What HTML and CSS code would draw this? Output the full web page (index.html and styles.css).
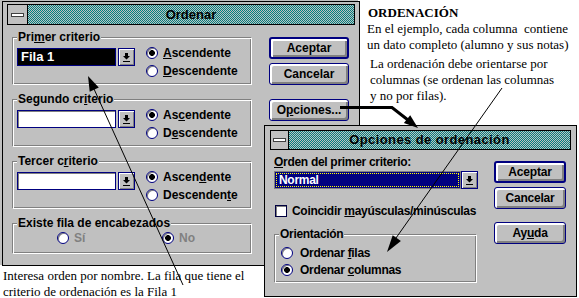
FILE: index.html
```html
<!DOCTYPE html>
<html lang="es">
<head>
  <meta charset="UTF-8" />
  <meta name="viewport" content="width=device-width, initial-scale=1.0"/>
  <title>Ordenar</title>
  <link rel="stylesheet" href="styles.css">
</head>
<body>
  <div class="screen">

    <!-- Dialogo principal -->
    <section class="win win-sort">
      <header class="titlebar">
        <span class="sysbox"><i></i></span>
        <h1>Ordenar</h1>
      </header>
      <div class="client">
        <div class="groups">
          <fieldset class="group">
            <legend>Pri<u>m</u>er criterio</legend>
            <div class="criterio">
              <div class="combo">
                <span class="field sel">Fila 1</span>
                <span class="drop"><svg width="7" height="9" viewBox="0 0 7 9"><path d="M2 0h3v3h2L3.5 6.5 0 3h2z M0 8h7v1H0z"/></svg></span>
              </div>
              <div class="radios">
                <label class="radio on"><span class="dot"></span><span><u>A</u>scendente</span></label>
                <label class="radio"><span class="dot"></span><span><u>D</u>escendente</span></label>
              </div>
            </div>
          </fieldset>

          <fieldset class="group">
            <legend>Segundo cr<u>i</u>terio</legend>
            <div class="criterio">
              <div class="combo">
                <span class="field"></span>
                <span class="drop"><svg width="7" height="9" viewBox="0 0 7 9"><path d="M2 0h3v3h2L3.5 6.5 0 3h2z M0 8h7v1H0z"/></svg></span>
              </div>
              <div class="radios">
                <label class="radio on"><span class="dot"></span><span>As<u>c</u>endente</span></label>
                <label class="radio"><span class="dot"></span><span>D<u>e</u>scendente</span></label>
              </div>
            </div>
          </fieldset>

          <fieldset class="group">
            <legend>Tercer c<u>r</u>iterio</legend>
            <div class="criterio">
              <div class="combo">
                <span class="field"></span>
                <span class="drop"><svg width="7" height="9" viewBox="0 0 7 9"><path d="M2 0h3v3h2L3.5 6.5 0 3h2z M0 8h7v1H0z"/></svg></span>
              </div>
              <div class="radios">
                <label class="radio on"><span class="dot"></span><span>Ascen<u>d</u>ente</span></label>
                <label class="radio"><span class="dot"></span><span>Descenden<u>t</u>e</span></label>
              </div>
            </div>
          </fieldset>

          <fieldset class="group group-head">
            <legend>Existe fila de encabezados</legend>
            <div class="heads">
              <label class="radio off"><span class="dot"></span><span>Sí</span></label>
              <label class="radio off on"><span class="dot"></span><span>No</span></label>
            </div>
          </fieldset>
        </div>

        <div class="buttons">
          <button class="btn default">Aceptar</button>
          <button class="btn">Cancelar</button>
          <button class="btn spaced">O<u>p</u>ciones...</button>
        </div>
      </div>
    </section>

    <div class="note note-top">
      <h2>ORDENACIÓN</h2>
      <p>En el ejemplo, cada columna&nbsp; contiene<br>un dato completo (alumno y sus notas)</p>
      <p>La ordenación debe orientarse por<br>columnas (se ordenan las columnas<br>y no por filas).</p>
    </div>

    <p class="note note-bottom">Interesa orden por nombre. La fila que tiene el<br>criterio de ordenación es la Fila 1</p>

    <!-- Dialogo de opciones -->
    <section class="win win-opts">
      <header class="titlebar">
        <span class="sysbox"><i></i></span>
        <h1>Opciones de ordenación</h1>
      </header>
      <div class="client">
        <div class="opts">
          <div class="caption"><u>O</u>rden del primer criterio:</div>
          <div class="combo wide">
            <span class="field focus"><span>Normal</span></span>
            <span class="drop"><svg width="7" height="9" viewBox="0 0 7 9"><path d="M2 0h3v3h2L3.5 6.5 0 3h2z M0 8h7v1H0z"/></svg></span>
          </div>
          <label class="check"><span class="box"></span><span>Coincidir <u>m</u>ayúsculas/minúsculas</span></label>
          <fieldset class="group group-orient">
            <legend>Orientación</legend>
            <div class="radios">
              <label class="radio"><span class="dot"></span><span>Ordenar <u>f</u>ilas</span></label>
              <label class="radio on"><span class="dot"></span><span>Ordenar <u>c</u>olumnas</span></label>
            </div>
          </fieldset>
        </div>
        <div class="buttons">
          <button class="btn default">Aceptar</button>
          <button class="btn">Cancelar</button>
          <button class="btn spaced">Ay<u>u</u>da</button>
        </div>
      </div>
    </section>

    <svg class="marks" width="579" height="298" viewBox="0 0 579 298">
      <path d="M340 107.5H392L408 120" fill="none" stroke="#000" stroke-width="3"/>
      <polygon points="418,128 410.2,115.3 403.9,123.1"/>
      <line x1="183" y1="285" x2="94" y2="89" stroke="#000" stroke-width="1"/>
      <polygon points="88,76 98.8,87.6 89.7,91.8"/>
      <line x1="502" y1="88" x2="396" y2="238" stroke="#000" stroke-width="1"/>
      <polygon points="387,252 400.9,241 392.7,235.2"/>
    </svg>
  </div>
</body>
</html>
```

FILE: styles.css
```css
body, html {
  margin: 0;
  padding: 0;
  background: #fff;
  font-family: "Liberation Sans", Arial, sans-serif;
}

.screen {
  position: relative;
  width: 579px;
  height: 298px;
  overflow: hidden;
}

/* Ventanas estilo Windows 3.1 */
.win {
  position: absolute;
  box-sizing: border-box;
  display: flex;
  flex-direction: column;
  background: #c0c0c0;
  border: 1px solid #000;
  padding: 2px 4px;
  font-weight: bold;
  font-size: 12px;
}

.win-sort {
  left: 2px;
  top: 1px;
  width: 358px;
  height: 265px;
  box-shadow: -2px -1px 0 #c0c0c0;
}

.win-opts {
  left: 264px;
  top: 125px;
  width: 313px;
  height: 172px;
  padding: 4px 5px;
  z-index: 2;
}

.titlebar {
  display: flex;
  box-sizing: border-box;
  height: 21px;
  border: 1px solid #000;
  flex: none;
}

.win-opts .titlebar {
  height: 20px;
}

.sysbox {
  display: flex;
  align-items: center;
  justify-content: center;
  width: 19px;
  background: #c0c0c0;
  border-right: 1px solid #000;
}

.win-opts .sysbox {
  width: 17px;
}

.sysbox i {
  display: block;
  width: 11px;
  height: 2px;
  background: #fff;
  border: 1px solid #404040;
}

.titlebar h1 {
  flex: 1;
  margin: 0;
  text-align: center;
  font-size: 13px;
  line-height: 19px;
  color: #000;
  background: repeating-conic-gradient(#008080 0 25%, #c0c0c0 0 50%) 0 0 / 2px 2px;
}

.win-opts .titlebar h1 {
  line-height: 18px;
  letter-spacing: 0.4px;
}

.client {
  display: flex;
  flex: 1;
  padding: 5px 0 0 5px;
}

.win-opts .client {
  padding: 4px 0 0 4px;
  letter-spacing: -0.3px;
}

.groups {
  display: flex;
  flex-direction: column;
  gap: 7px;
  width: 240px;
}

/* Marcos de grupo grabados */
.group {
  box-sizing: border-box;
  height: 55px;
  margin: 0;
  padding: 0 0 0 4px;
  min-width: 0;
  border: 1px solid;
  border-color: #808080 #fff #fff #808080;
  box-shadow: inset 1px 1px 0 #fff, inset -1px -1px 0 #808080;
}

.group legend {
  padding: 0 1px;
  font-size: 12px;
  line-height: 14px;
  background: #c0c0c0;
}

.group-head {
  height: 38px;
}

.criterio {
  display: flex;
}

.combo {
  display: flex;
  gap: 2px;
  margin-top: 4px;
  height: 18px;
}

.field {
  box-sizing: border-box;
  width: 99px;
  height: 18px;
  border: 1px solid #000080;
  background: #fff;
  box-shadow: inset 1px 1px 0 #808080;
  padding-left: 3px;
  line-height: 16px;
  font-size: 13px;
}

.field.sel {
  background: #000;
  color: #fff;
  box-shadow: none;
}

.drop {
  display: flex;
  align-items: center;
  justify-content: center;
  box-sizing: border-box;
  width: 17px;
  height: 18px;
  background: #c0c0c0;
  border: 1px solid #000080;
  box-shadow: inset 1px 1px 0 #fff, inset -1px -1px 0 #808080;
}

.radios {
  display: flex;
  flex-direction: column;
  margin-left: 11px;
}

.radio {
  display: flex;
  align-items: center;
  height: 18px;
  font-size: 12px;
  white-space: nowrap;
}

.dot {
  flex: none;
  box-sizing: border-box;
  width: 12px;
  height: 12px;
  margin-right: 5px;
  border-radius: 50%;
  border: 1px solid #000080;
  background: #fff;
  box-shadow: inset 1px 1px 0 #808080;
}

.radio.on .dot {
  background: radial-gradient(circle, #000 0 2.6px, #fff 3.2px);
}

.heads {
  display: flex;
  margin-left: 40px;
}

.heads .radio {
  height: 16px;
}

.heads .radio:first-child {
  width: 105px;
}

.radio.off {
  color: #808080;
}

.buttons {
  display: flex;
  flex-direction: column;
  gap: 4px;
  margin-left: 17px;
  padding-top: 7px;
}

.btn {
  box-sizing: border-box;
  width: 80px;
  height: 22px;
  padding: 0;
  font: bold 12px "Liberation Sans", Arial, sans-serif;
  color: #000;
  background: #c0c0c0;
  border: 1px solid #000080;
  border-radius: 3px;
  box-shadow:
    inset 1px 1px 0 #fff,
    inset 2px 2px 0 #fff,
    inset -1px -1px 0 #808080,
    inset -2px -2px 0 #808080;
}

.btn.default {
  border-width: 2px;
}

.btn.spaced {
  margin-top: 10px;
}

/* Opciones de ordenacion */
.opts {
  display: flex;
  flex-direction: column;
  width: 204px;
}

.caption {
  line-height: 16px;
}

.combo.wide {
  gap: 0;
  margin-top: 1px;
}

.combo.wide .field {
  width: 187px;
  padding: 1px;
  border-color: #808080;
  background: #000080;
  box-shadow: none;
}

.field.focus span {
  display: block;
  box-sizing: border-box;
  height: 14px;
  padding-left: 2px;
  line-height: 13px;
  color: #fff;
  font-size: 12px;
  border: 1px dotted #ff0;
}

.check {
  display: flex;
  align-items: center;
  height: 16px;
  margin-top: 14px;
  white-space: nowrap;
}

.check .box {
  flex: none;
  box-sizing: border-box;
  width: 12px;
  height: 12px;
  margin: 0 5px 0 1px;
  background: #fff;
  border: 1px solid #000040;
  box-shadow: inset 1px 1px 0 #808080;
}

.group-orient {
  width: 203px;
  height: 56px;
  margin-top: 8px;
}

.group-orient .radios {
  margin: 3px 0 0 2px;
}

.group-orient .radio {
  height: 17px;
}

.group-orient .dot {
  margin-right: 7px;
}

.win-opts .buttons {
  margin-left: 16px;
}

.win-opts .btn {
  width: 72px;
  letter-spacing: -0.2px;
}

.win-opts .btn.spaced {
  margin-top: 9px;
}

/* Anotaciones */
.note {
  position: absolute;
  margin: 0;
  font-family: "Liberation Serif", "Times New Roman", serif;
  font-size: 13px;
  line-height: 16px;
  color: #000;
  white-space: nowrap;
}

.note-top {
  left: 367px;
  top: 5px;
}

.note-top h2 {
  margin: 0 0 0 1px;
  font-size: 13px;
  line-height: 16px;
}

.note-top p {
  margin: 0;
}

.note-top p + p {
  margin-top: 3px;
  padding-left: 3px;
}

.note-bottom {
  left: 3px;
  top: 268px;
}

.marks {
  position: absolute;
  left: 0;
  top: 0;
  z-index: 3;
  pointer-events: none;
}
```
